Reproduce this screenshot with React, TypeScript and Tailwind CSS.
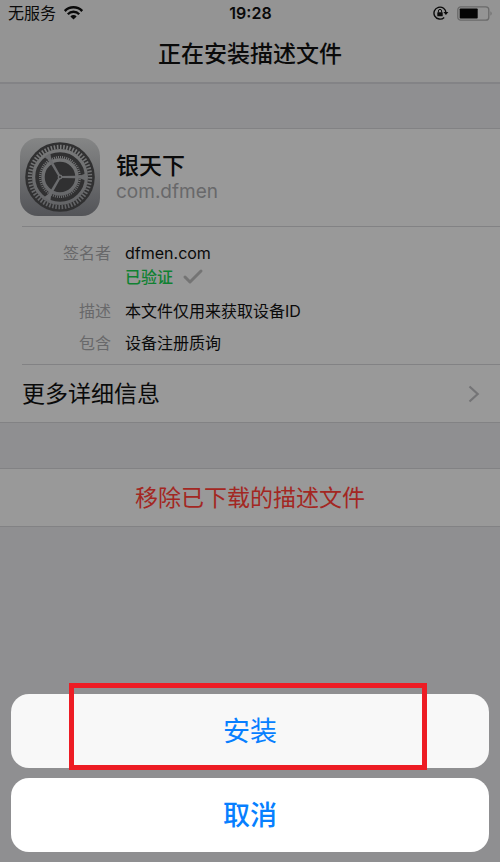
import { Check } from "lucide-react";

const details = [
  { label: "描述", value: "本文件仅用来获取设备ID" },
  { label: "包含", value: "设备注册质询" },
];

function WifiIcon() {
  return (
    <svg width="19" height="14" viewBox="0 0 19 14" fill="none" stroke="#0a0a0a">
      <path d="M0.8 5 A12.2 12.2 0 0 1 18.2 5" strokeWidth="2.5" />
      <path d="M3.8 8.2 A7.9 7.9 0 0 1 15.2 8.2" strokeWidth="2.3" />
      <path d="M9.5 13.4 L6.4 10.4 A4.3 4.3 0 0 1 12.6 10.4 Z" fill="#0a0a0a" stroke="none" />
    </svg>
  );
}

function RotationLockIcon() {
  return (
    <svg width="16" height="14" viewBox="0 0 16 14" fill="none" stroke="#0a0a0a">
      <path d="M11.2 11.4 A6 6 0 1 1 13 7" strokeWidth="1.4" />
      <path d="M10.4 5.9 H15.4 L12.9 8.9 Z" fill="#0a0a0a" stroke="none" />
      <rect x="4.3" y="6.3" width="5.4" height="3.9" rx="0.5" fill="#0a0a0a" stroke="none" />
      <path d="M5.4 6.5 V5 A1.6 1.6 0 0 1 8.6 5 V6.5" strokeWidth="1" />
    </svg>
  );
}

function BatteryIcon() {
  return (
    <svg width="36" height="15" viewBox="0 0 36 15" fill="none">
      <rect x="0.8" y="0.8" width="31" height="13.4" rx="3" stroke="#6a6a6a" strokeWidth="1.3" />
      <rect x="2.7" y="2.5" width="18" height="10" rx="0.8" fill="#050505" />
      <path d="M33.5 5.2 A3 3 0 0 1 33.5 9.8 Z" fill="#6a6a6a" />
    </svg>
  );
}

function SettingsIcon() {
  return (
    <svg
      width="80"
      height="78"
      viewBox="0 0 80 78"
      fill="none"
      className="shrink-0"
      role="img"
      aria-label="设置"
    >
      <defs>
        <linearGradient id="tile" x1="0" y1="0" x2="0" y2="1">
          <stop offset="0" stopColor="#858686" />
          <stop offset="1" stopColor="#535458" />
        </linearGradient>
        <linearGradient id="gear" gradientUnits="userSpaceOnUse" x1="0" y1="-39" x2="0" y2="39">
          <stop offset="0" stopColor="#7c7d7d" />
          <stop offset="1" stopColor="#5f6063" />
        </linearGradient>
      </defs>
      <rect width="80" height="78" rx="18" fill="url(#tile)" />
      <g transform="translate(40 39)">
        <circle r="34.8" fill="#303031" />
        <circle r="30" stroke="url(#gear)" strokeWidth="4.4" pathLength="120" strokeDasharray="1 1" />
        <circle r="26.4" stroke="url(#gear)" strokeWidth="3.2" />
        <circle r="19.8" stroke="url(#gear)" strokeWidth="2.4" pathLength="120" strokeDasharray="1 1" />
        <circle r="17" stroke="url(#gear)" strokeWidth="3.4" />
        {[0, 120, 240].map((angle) => (
          <path
            key={angle}
            transform={`rotate(${angle})`}
            d="M0 -1.1 L15 -1.3 L21 -1.8 L25.5 -3.6 V3.6 L21 1.8 L15 1.3 L0 1.1 Z"
            fill="#6b6c6e"
          />
        ))}
        <circle r="2.4" fill="#6b6c6e" />
        <circle r="1" fill="#303031" />
      </g>
    </svg>
  );
}

function ChevronIcon() {
  return (
    <svg width="12" height="18" viewBox="0 0 12 18" fill="none" stroke="#747476">
      <path d="M1.5 1.5 L9.7 9 L1.5 16.5" strokeWidth="2.2" />
    </svg>
  );
}

export default function App() {
  return (
    <div className="w-full min-h-screen flex flex-col bg-[#8f8f91] text-[#0a0a0a] font-['Inter','Noto_Sans_CJK_SC',sans-serif]">
      <header className="bg-[#949494] border-b-2 border-[#838386]">
        <div className="h-[26px] grid grid-cols-3 items-center pl-2 pr-[7px] text-base leading-6">
          <div className="flex items-center gap-2">
            <span>无服务</span>
            <WifiIcon />
          </div>
          <time className="text-center font-semibold">19:28</time>
          <div className="flex items-center justify-end gap-2">
            <RotationLockIcon />
            <BatteryIcon />
          </div>
        </div>
        <h1 className="h-14 flex items-center justify-center text-[23px] leading-8 font-medium">
          正在安装描述文件
        </h1>
      </header>

      <main>
        <section className="mt-11 bg-[#999999] border-y border-[#828284]">
          <div className="flex gap-4 pl-5 pt-[9px] pb-[10px]">
            <SettingsIcon />
            <div className="pt-[14px]">
              <h2 className="text-[23px] leading-7 font-medium">银天下</h2>
              <p className="text-[19px] leading-6 text-[#68686a]">com.dfmen</p>
            </div>
          </div>
          <dl className="ml-[22px] pt-[14px] pb-[9px] flex flex-col gap-2 border-y border-[#828284] text-base leading-6">
            <div className="flex gap-[14px] pb-[2px]">
              <dt className="w-[89px] text-right text-[#68686a]">签名者</dt>
              <dd>
                dfmen.com
                <div className="flex items-center gap-2 font-medium text-[#108132]">
                  已验证
                  <Check className="text-[#747474]" size={24} strokeWidth={3} />
                </div>
              </dd>
            </div>
            {details.map((item) => (
              <div key={item.label} className="flex gap-[14px]">
                <dt className="w-[89px] text-right text-[#68686a]">{item.label}</dt>
                <dd>{item.value}</dd>
              </div>
            ))}
          </dl>
          <button className="w-full h-[57px] flex items-center justify-between pl-[22px] pr-5 text-[23px] leading-8">
            更多详细信息
            <ChevronIcon />
          </button>
        </section>

        <section className="mt-[45px] bg-[#999999] border-y border-[#828284]">
          <button className="w-full h-[57px] text-[23px] leading-8 text-[#a32722]">
            移除已下载的描述文件
          </button>
        </section>
      </main>

      <footer className="mt-auto px-[11px] pt-10 pb-[10px] flex flex-col gap-[10px] text-[27px] leading-9 text-[#077fff]">
        <div className="relative">
          <button className="w-full h-[74px] pt-[2px] rounded-[18px] bg-[#f8f8f8]">安装</button>
          <div className="absolute -top-[11px] -bottom-[2px] left-[58px] right-[62px] border-[5px] border-[#ed1c24] pointer-events-none" />
        </div>
        <button className="w-full h-[74px] pt-[2px] rounded-[18px] bg-white font-medium">取消</button>
      </footer>
    </div>
  );
}
